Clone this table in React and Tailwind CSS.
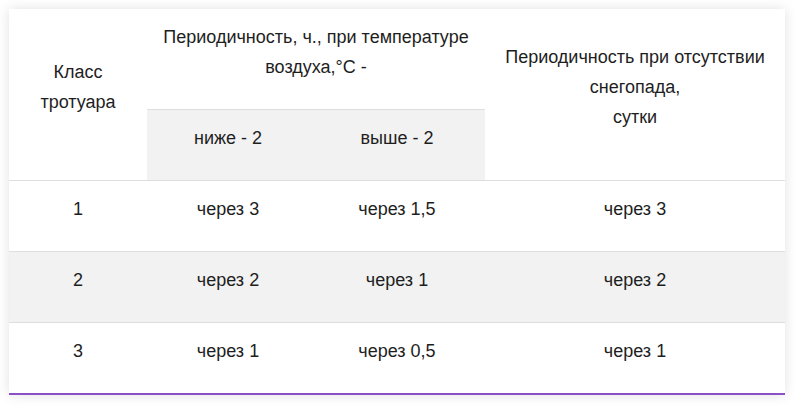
import React from "react";

const rows = [
  ["1", "через 3", "через 1,5", "через 3"],
  ["2", "через 2", "через 1", "через 2"],
  ["3", "через 1", "через 0,5", "через 1"],
];

function Cell({ children, className = "" }) {
  return (
    <div className={`flex items-center justify-center text-center ${className}`}>
      <div className="mb-[15px] leading-[30px]">{children}</div>
    </div>
  );
}

export default function App() {
  return (
    <div className="min-h-[408px] bg-white p-[9px] font-['Liberation_Sans',Arial,sans-serif] text-[18px] text-[#1e1e1e]">
      <div className="w-[776px] bg-white shadow-[0_0_12px_rgba(0,0,0,0.12)] border-b-2 border-[#8b4fc6]">
        <div className="grid grid-cols-[138px_162px_176px_300px] grid-rows-[100px_71px]">
          <Cell className="row-span-2">
            Класс
            <br />
            тротуара
          </Cell>
          <div className="col-span-2 flex justify-center pt-[13px] text-center">
            <div className="leading-[30px]">
              Периодичность, ч., при температуре
              <br />
              воздуха,°C -
            </div>
          </div>
          <Cell className="row-span-2">
            Периодичность при отсутствии
            <br />
            снегопада,
            <br />
            сутки
          </Cell>
          <Cell className="border-t border-[#dedede] bg-[#f2f2f2] pt-[1px]">ниже - 2</Cell>
          <Cell className="border-t border-[#dedede] bg-[#f2f2f2] pt-[1px]">выше - 2</Cell>
        </div>
        {rows.map((r, i) => (
          <div
            key={i}
            className={`grid h-[71px] grid-cols-[138px_162px_176px_300px] border-t border-[#dedede] ${
              i === 1 ? "bg-[#f2f2f2]" : "bg-white"
            }`}
          >
            {r.map((c, j) => (
              <Cell key={j} className="pt-[1px]">
                {c}
              </Cell>
            ))}
          </div>
        ))}
      </div>
    </div>
  );
}
